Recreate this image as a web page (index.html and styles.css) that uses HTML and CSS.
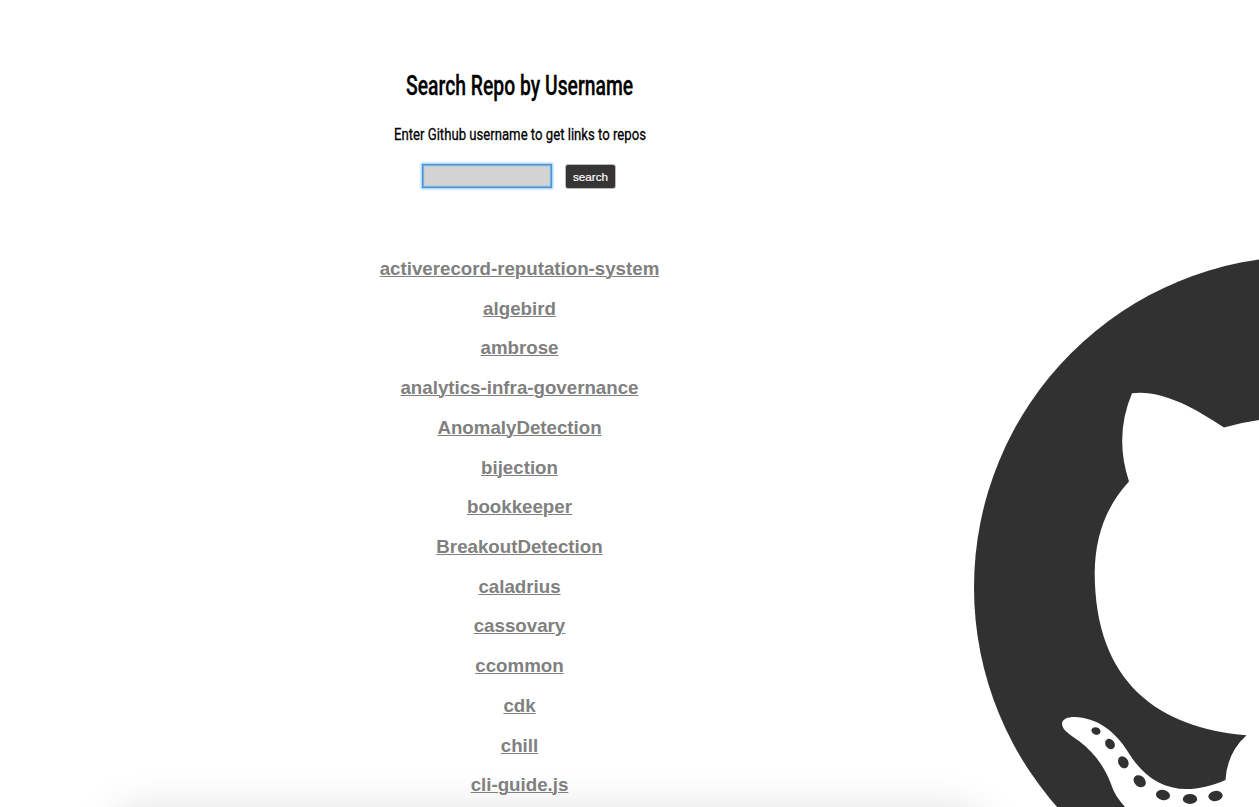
FILE: index.html
```html
<!DOCTYPE html>
<html lang="en">
<head>
<meta charset="utf-8">
<title>Search Repo by Username</title>
<link rel="stylesheet" href="styles.css">
</head>
<body>
<div class="page">
  <main class="content">
    <h1 class="title"><span>Search Repo by Username</span></h1>
    <p class="hint"><span>Enter Github username to get links to repos</span></p>
    <form class="search">
      <input class="search-input" type="text" aria-label="Github username">
      <button class="search-button" type="button">search</button>
    </form>
    <div class="repos">
      <h3><a href="#">activerecord-reputation-system</a></h3>
      <h3><a href="#">algebird</a></h3>
      <h3><a href="#">ambrose</a></h3>
      <h3><a href="#">analytics-infra-governance</a></h3>
      <h3><a href="#">AnomalyDetection</a></h3>
      <h3><a href="#">bijection</a></h3>
      <h3><a href="#">bookkeeper</a></h3>
      <h3><a href="#">BreakoutDetection</a></h3>
      <h3><a href="#">caladrius</a></h3>
      <h3><a href="#">cassovary</a></h3>
      <h3><a href="#">ccommon</a></h3>
      <h3><a href="#">cdk</a></h3>
      <h3><a href="#">chill</a></h3>
      <h3><a href="#">cli-guide.js</a></h3>
    </div>
  </main>
  <aside class="logo">
    <svg viewBox="974 257 285 550" width="285" height="550" aria-hidden="true">
      <circle class="ink" cx="1305.3" cy="587.5" r="331.3"/>
      <path class="paper" d="M1132 393.2C1160 389.500 1192 406 1224 427.500Q1241 422.500 1259 420V807H1125C1118 799 1114 793 1111 784C1105 768 1095 753 1079 741C1069 734 1062 730 1062 723.500C1063 716 1077 715.500 1091 720C1109 726 1121 740 1130 755C1152 789 1184 798 1225.500 780Q1227 753 1246.500 735.300C1159 728 1095 683 1094.700 573Q1095 518 1129 481.500Q1114 436 1132 393.200Z"/>
      <g class="ink">
        <ellipse cx="1096" cy="731" rx="4.700" ry="3.600" transform="rotate(20 1096 731)"/>
        <ellipse cx="1110" cy="744" rx="5.600" ry="4.500" transform="rotate(55 1110 744)"/>
        <ellipse cx="1123.300" cy="762.300" rx="6.300" ry="4.900" transform="rotate(60 1123.300 762.300)"/>
        <ellipse cx="1139.700" cy="781.300" rx="6.800" ry="5.300" transform="rotate(42 1139.700 781.300)"/>
        <ellipse cx="1163" cy="795" rx="7.100" ry="5.100" transform="rotate(12 1163 795)"/>
        <ellipse cx="1190" cy="799" rx="7.200" ry="5.100"/>
        <ellipse cx="1215.500" cy="796" rx="7.200" ry="5.100" transform="rotate(-8 1215.500 796)"/>
      </g>
    </svg>
  </aside>
</div>
</body>
</html>
```
FILE: styles.css
```css
body {
  margin: 0;
  background: #fff;
  color: #000;
  font-family: "Liberation Sans", Arial, sans-serif;
}

.page {
  position: relative;
  display: grid;
  grid-template-columns: 974px 285px;
  height: 807px;
  overflow: hidden;
}

/* Soft shadow rising from the card below the fold */
.page::before {
  content: "";
  position: absolute;
  top: 817px;
  left: 119px;
  width: 857px;
  height: 80px;
  box-shadow: 0 0 46px rgba(0, 0, 0, 0.19);
}

.content {
  position: relative;
  display: flex;
  flex-direction: column;
  align-items: center;
  padding: 66px 0 0 65px;
}

.title,
.hint {
  display: flex;
  justify-content: center;
  margin: 0;
  font-family: Roboto, sans-serif;
  white-space: nowrap;
}

.title {
  font-size: 27px;
  font-weight: 500;
  line-height: 40px;
  -webkit-text-stroke: 0.3px #000;
}

.title span {
  transform: scaleX(0.716);
}

.hint {
  margin-top: 16px;
  font-size: 17px;
  font-weight: 400;
  line-height: 24px;
  -webkit-text-stroke: 0.3px #000;
}

.hint span {
  transform: scaleX(0.773);
}

.search {
  display: flex;
  align-items: center;
  gap: 13px;
  margin-top: 18px;
  height: 24px;
}

.search-input {
  box-sizing: border-box;
  width: 130px;
  height: 24px;
  border: 1px solid #4a98dc;
  outline: none;
  background: #d3d3d3;
  box-shadow: 0 0 2px 1px #8cc6f6, inset 0 0 1px 1px #6fa9dc;
}

.search-button {
  width: 51px;
  height: 25px;
  margin-top: 1px;
  margin-right: 1px;
  padding: 0;
  border: 1px solid #bbb;
  border-radius: 3px;
  background: #373435;
  color: #fff;
  font: 11.7px "Liberation Sans", Arial, sans-serif;
  -webkit-text-stroke: 0.2px #fff;
}

.repos {
  display: flex;
  flex-direction: column;
  align-items: center;
  gap: 18.72px;
  margin-top: 70px;
}

.repos h3 {
  margin: 0;
  font-size: 18.72px;
  line-height: 21px;
}

.repos a {
  color: #808080;
  text-decoration-thickness: 1px;
}

.logo {
  position: relative;
  align-self: end;
  height: 550px;
}

.logo svg {
  display: block;
}

.ink {
  fill: #313131;
}

.paper {
  fill: #fff;
}
```
